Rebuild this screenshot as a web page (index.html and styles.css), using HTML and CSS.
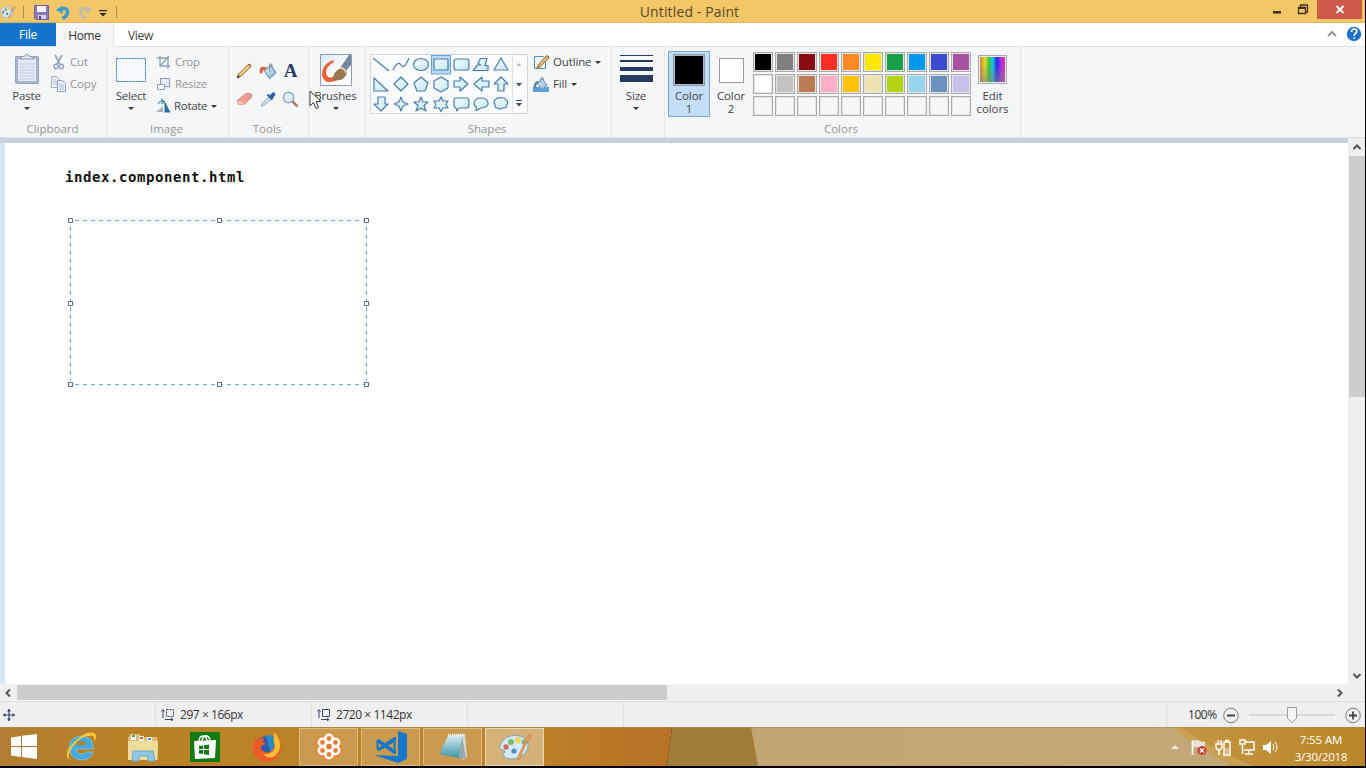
FILE: index.html
```html
<!DOCTYPE html>
<html lang="en">
<head>
<meta charset="utf-8">
<title>Untitled - Paint</title>
<link rel="stylesheet" href="styles.css">
</head>
<body>
<svg width="0" height="0" class="defs">
  <defs>
    <linearGradient id="shapeFill" x1="0" y1="0" x2="1" y2="1"><stop offset="0" stop-color="#f4fcff"/><stop offset="1" stop-color="#c5e6f5"/></linearGradient>
    <linearGradient id="blueFill" x1="0" y1="0" x2="1" y2="1"><stop offset="0" stop-color="#f4fbff"/><stop offset="1" stop-color="#79a9d5"/></linearGradient>
    <linearGradient id="note" x1="0" y1="0" x2="0" y2="1"><stop offset="0" stop-color="#d9eef1"/><stop offset="1" stop-color="#3c94a9"/></linearGradient>
    <symbol id="palette" viewBox="0 0 34 30">
      <path d="M6 8C12 1 28 2 30 12c1 8-7 15-16 15-7 0-10-4-8-6 2-1 1-3-2-3-4-1-2-7 2-10z" fill="#d4eaf5" stroke="#72a5c5"/>
      <circle cx="13" cy="10" r="3" fill="#77ba6a"/><circle cx="20" cy="8" r="3" fill="#ead35a"/><circle cx="8" cy="15" r="2.7" fill="#d2685e"/><circle cx="16" cy="19" r="2.6" fill="#4c8dcc"/><circle cx="26" cy="10" r="2.5" fill="#74b976"/>
      <path d="M19 27L28 7l4-5 1 5-4 3-8 18z" fill="#e39f5c" stroke="#bd7541" stroke-width=".6"/>
    </symbol>
    <symbol id="pencil" viewBox="0 0 16 16"><path d="M1 15l1.500-4L12 1.500q2-.5 2.500 2.500L5 13.500z" fill="#e9bb66" stroke="#8b6e4a" stroke-width=".9"/><path d="M4 12L13 3" stroke="#f8dc9c"/><path d="M12 1.500q3-1 2.500 2.500" fill="none" stroke="#b06848" stroke-width="1.300"/><path d="M1 15l1-3 2 2z" fill="#393633"/></symbol>
    <symbol id="bucket" viewBox="0 0 17 16"><path d="M5 7l6-4.500 5 6.500-6 5.500z" fill="url(#blueFill)" stroke="#6f8dab"/><path d="M10 8V2q1.500-2.500 2.500 1v2" fill="none" stroke="#7d8f9f"/><path d="M7 4Q-1 2 1 10l2 0Q3 6 7 6z" fill="#df6349"/></symbol>
  </defs>
</svg>
<div class="screen">
  <header class="titlebar">
    <div class="quick">
      <svg class="q-app" width="16" height="18" viewBox="1 0 34 30"><use href="#palette" width="34" height="30"/></svg>
      <i class="q-sep"></i>
      <svg class="q-save" width="15" height="15" viewBox="0 0 15 15"><path d="M.5.5h14v14H2L.5 13z" fill="#8a78ba" stroke="#725f9f"/><path d="M3 1h9v6H3z" fill="#f3f3fa"/><path d="M4 10h8v4H4z" fill="#d3d1e2"/><path d="M5 11h2v3H5z" fill="#504682"/></svg>
      <svg class="q-undo" width="15" height="15" viewBox="0 0 15 15"><path d="M4 4.500Q11 1.500 11.500 7q0 4-5 6.500" fill="none" stroke="#3c9cc9" stroke-width="3.600"/><path d="M0 5L6.500.5v8.500z" fill="#3c9cc9"/></svg>
      <svg class="q-redo" width="15" height="15" viewBox="0 0 15 15"><path d="M11 4.500Q4 1.500 3.500 7q0 4 5 6.500" fill="none" stroke="#c6bba6" stroke-width="3.400"/><path d="M15 5L8.500.5v8.500z" fill="#c6bba6"/></svg>
      <svg class="q-more" width="8" height="7"><path d="M0 0h8v1.300H0zM.5 3h7L4 6.500z" fill="#2e2818"/></svg>
      <i class="q-sep"></i>
    </div>
    <div class="title">Untitled - Paint</div>
    <div class="winbtns">
      <svg width="90" height="20" viewBox="0 0 90 20"><path d="M1 11h8v2.500H1z" fill="#3c311b"/><path d="M26.500 7.500h7v6h-7zM28.500 7V5h7v7H34" fill="none" stroke="#3c311b" stroke-width="1.300"/><path d="M26 7h8v2h-8z" fill="#3c311b"/><path d="M45 0h45v19H45z" fill="#ce5a4b"/><path d="M64.500 6l7 7m0-7l-7 7" stroke="#fff" stroke-width="1.900"/></svg>
    </div>
  </header>
  <nav class="tabs">
    <div class="tab-file">File</div><div class="tab-home">Home</div><div class="tab-view">View</div>
    <svg class="tab-help" width="38" height="20" viewBox="0 0 38 20"><path d="M1 12l4-4 4 4" fill="none" stroke="#999" stroke-width="2"/><circle cx="27" cy="10" r="7.200" fill="#1b70cc"/><path d="M24.500 8q0-3 2.700-3 2.600 0 2.600 2.300 0 1.400-1.500 2.200-1 .6-1 2v.5M27.200 13.400v1.600" fill="none" stroke="#fff" stroke-width="1.700"/></svg>
  </nav>
  <section class="ribbon">
    <div class="group g-clip">
      <div class="body">
        <div class="big b-paste">
          <svg width="26" height="34" viewBox="0 0 26 34"><rect x="1.500" y="4.500" width="23" height="27" rx="1" fill="#a7b4cb" stroke="#96a4be"/><path d="M4 7h18v22H4z" fill="#e4ebf7"/><path d="M5 12h16M5 15h16M5 18h16M5 21h16M5 24h16M5 27h16" stroke="#bdcce2"/><path d="M6 7q1-3 5-3 2-4 4 0 4 0 5 3z" fill="#e3e5e9" stroke="#8998b0"/></svg>
          <span>Paste</span><i class="arr"></i>
        </div>
        <div class="rows off">
          <div><svg width="16" height="16" viewBox="0 0 16 16"><path d="M4 1l5 9M11 1L6 10" stroke="#97a5ba" stroke-width="1.600"/><ellipse cx="5" cy="12.500" rx="2" ry="2.300" fill="none" stroke="#8fa3c1" stroke-width="1.400"/><ellipse cx="10.500" cy="12.500" rx="2" ry="2.300" fill="none" stroke="#8fa3c1" stroke-width="1.400"/></svg><span>Cut</span></div>
          <div><svg width="16" height="16" viewBox="0 0 16 16"><path d="M.5.5h5l3 3v8h-8z" fill="#eef2f8" stroke="#a0afc9"/><path d="M6.500 4.500h5l3 3v8h-8z" fill="#e7edf7" stroke="#93a5c2"/><path d="M2 4h4M2 6h4M2 8h4M8 9h5M8 11h5M8 13h5" stroke="#b1c0d7"/></svg><span>Copy</span></div>
        </div>
      </div>
      <div class="label l-clip">Clipboard</div>
    </div>
    <div class="group g-image">
      <div class="body">
        <div class="big b-select">
          <svg width="30" height="34" viewBox="0 0 30 34"><rect x=".5" y="6.500" width="29" height="23" fill="#f3f9fe" stroke="#2972b1" stroke-dasharray="2 1"/></svg>
          <span>Select</span><i class="arr"></i>
        </div>
        <div class="rows">
          <div class="dim"><svg width="16" height="16" viewBox="0 0 16 16"><path d="M4 2v10h10M1 4h11v11M5 11l8-9" fill="none" stroke="#8ba0bb" stroke-width="1.300"/></svg><span>Crop</span></div>
          <div class="dim"><svg width="16" height="16" viewBox="0 0 16 16"><path d="M4.500 2.500h9v8h-9z" fill="#e6eefa" stroke="#8199c0"/><path d="M1.500 8.500h7v5h-7z" fill="#f3f7fd" stroke="#8ca3c5"/></svg><span>Resize</span></div>
          <div><svg width="16" height="16" viewBox="0 0 16 16"><path d="M0 14L7 8v6z" fill="#a9b7c3"/><path d="M8.500 14.500V3L14.500 14.500z" fill="#286ea5"/><path d="M2 6q2-4 6-2M5 1l3.500 3-3.500 2" fill="none" stroke="#508bb4" stroke-width="1.300"/></svg><span class="t-rotate">Rotate</span><i class="arr side"></i></div>
        </div>
      </div>
      <div class="label l-image">Image</div>
    </div>
    <div class="group g-tools">
      <div class="body tools">
        <svg width="16" height="16"><use href="#pencil" width="16" height="16"/></svg>
        <svg width="18" height="17"><use href="#bucket" width="18" height="17"/></svg>
        <b class="glyph">A</b>
        <svg width="17" height="16" viewBox="0 0 17 16"><path d="M1 10L9 3q2-1 3-.5l3.500.5q1 2-.5 4l-7 6.500H2.500z" fill="#ec9c90" stroke="#d07a72" stroke-width=".8"/><path d="M1 10l5.500 1L8 13.500H2.500z" fill="#f9c6b8"/></svg>
        <svg width="16" height="16" viewBox="0 0 16 16"><path d="M1 15l1.500-3 6-6 2.500 2.500-6.500 5.500z" fill="#c6e0ea" stroke="#8fa5b3" stroke-width=".9"/><path d="M7.500 3.500l5 5M10 6l2.500-3q2-1.500 1.500 1l-2.500 3" fill="#326bae" stroke="#2c5f9c" stroke-width="2.200"/></svg>
        <svg width="17" height="17" viewBox="0 0 17 17"><circle cx="6.500" cy="6.500" r="5.200" fill="#dceef7" stroke="#9caab5" stroke-width="1.500"/><path d="M10.500 10.500l5 5" stroke="#a77f66" stroke-width="2.500"/></svg>
      </div>
      <div class="label l-tools">Tools</div>
    </div>
    <div class="group g-brush">
      <div class="body">
        <div class="big b-brush">
          <svg width="32" height="34" viewBox="0 0 32 34"><defs><linearGradient id="bg1" x1="0" y1="0" x2="1" y2="1"><stop offset="0" stop-color="#d5e5f4"/><stop offset=".6" stop-color="#fff"/></linearGradient></defs><path d="M.5 2.500h31v31H.5z" fill="url(#bg1)" stroke="#8e9cac"/><path d="M13 8Q1 13 2 23q2 11 16 5l-2-4Q7 28 6 21q0-7 8-11z" fill="#ec6238"/><path d="M13 28q0-9 8-12 5 0 6 5-3 9-14 7z" fill="#96764a"/><path d="M20 16l9-13h2v10l-5 6z" fill="#7687a3"/><path d="M20 16q5 0 6 5" fill="none" stroke="#d9cdb2" stroke-width="2"/></svg>
          <span>Brushes</span><i class="arr"></i>
        </div>
      </div>
    </div>
    <div class="group g-shapes">
      <div class="body">
        <div class="gallery">
          <svg width="141" height="58" viewBox="0 0 141 58">
            <rect x="60.500" y=".5" width="19" height="18.500" fill="#b9dafa" stroke="#6aa2dc"/>
            <g fill="url(#shapeFill)" stroke="#4a7dae" stroke-width="1.200" stroke-linejoin="round">
              <path d="M2 3l16 13" /><path d="M22 15q5-10 8-5t8-7" fill="none"/><ellipse cx="50" cy="9.500" rx="7.500" ry="6"/><path d="M63 4h14v11H63z"/><rect x="83" y="4" width="15" height="11" rx="2.500"/><path d="M102 15.500l4.500-5.500 3 0-2.500-2 2.500-4.500h6.500l-2 7h3v5z"/><path d="M130 3l7 12h-14z"/>
              <path d="M3 23v13h14z"/><path d="M30 22l7 7-7 7-7-7z"/><path d="M50 22l7 6-3 8h-8l-3-8z"/><path d="M70 22l7 4v7l-7 4-7-4v-7z"/><path d="M83 26h6v-4l8 7-8 7v-4h-6z"/><path d="M118 26h-7v-4l-8 7 8 7v-4h7z"/><path d="M127 36v-7h-4l7-7 7 7h-4v7z"/>
              <path d="M7 42h7v7h3l-7 7-7-7h4z"/><path d="M30 42l2 5 5 2-5 2-2 5-2-5-5-2 5-2z"/><path d="M50 42l2 5h5l-4 3.500 2 5.500-5-3-5 3 2-5.500-4-3.500h5z"/><path d="M70 42l2 4h5l-2 3.500 2 3.500h-5l-2 3.500-2-3.500h-5l2-3.500-2-3.500h5z"/><path d="M85 43h10q3 0 3 3v4q0 3-3 3h-7l-2 3-1-3q-2 0-2-3v-4q0-3 2-3z"/><path d="M103 48q1-5 7-5t7 4.500-7 5.500l-5 2.500.500-3.500q-2.500-1-2.500-4z"/><path d="M125 44q3-2 5-1 4-1 5 2 3 2 1 4.500 0 3.500-4 3.500-3 2-5 0-4 0-3-3.500-2-4 1-5.500z"/>
            </g>
          </svg>
          <svg width="15" height="58" viewBox="0 0 15 58"><path d="M.5 0v58" stroke="#dde1e5"/><path d="M4.500 11L7 8l2.500 3z" fill="#b4b9be"/><path d="M4 28h6l-3 3.500zM4 45h6v1H4zm0 3h6l-3 3.500z" fill="#444d59"/></svg>
        </div>
        <div class="rows shape-opts">
          <div><svg width="17" height="16" viewBox="0 0 17 16"><path d="M11 2.500H1.500v12h11V8" fill="#f2f9fe" stroke="#5591bc"/><path d="M5 11L13 2q3-1 3 2L7 13l-3 1z" fill="#e4b86c" stroke="#8c704c"/></svg><span>Outline</span><i class="arr side"></i></div>
          <div><svg width="17" height="16" viewBox="0 0 17 16"><path d="M0 11h16v5H0z" fill="#5b9fe0"/><path d="M4 7l5-4.500L14 9l-5 5z" fill="url(#blueFill)" stroke="#7894ae"/><path d="M8 7V2q1.500-2 2.500 1v2" fill="none" stroke="#7d8f9f"/><path d="M6 5Q0 5 1 12l2-.5Q3 7 6 7z" fill="#5c7e9d"/></svg><span>Fill</span><i class="arr side"></i></div>
        </div>
      </div>
      <div class="label l-shapes">Shapes</div>
    </div>
    <div class="group g-size">
      <div class="body"><div class="big b-size">
        <svg width="33" height="34" viewBox="0 0 33 34"><path d="M0 3h33v1H0zM0 8h33v2H0zM0 15h33v4H0zM0 23h33v7H0z" fill="#243b5f"/></svg>
        <span>Size</span><i class="arr"></i>
      </div></div>
    </div>
    <div class="group g-colors">
      <div class="body">
        <div class="col1"><div class="sw1"></div><span>Color<br>1</span></div>
        <div class="col2"><div class="sw2"></div><span>Color<br>2</span></div>
        <div class="pal">
          <i class="c-black"></i><i class="c-gray"></i><i class="c-dred"></i><i class="c-red"></i><i class="c-orange"></i><i class="c-yellow"></i><i class="c-green"></i><i class="c-turq"></i><i class="c-indigo"></i><i class="c-purple"></i>
          <i class="c-white"></i><i class="c-lgray"></i><i class="c-brown"></i><i class="c-rose"></i><i class="c-gold"></i><i class="c-cream"></i><i class="c-lime"></i><i class="c-sky"></i><i class="c-steel"></i><i class="c-lav"></i>
          <i></i><i></i><i></i><i></i><i></i><i></i><i></i><i></i><i></i><i></i>
        </div>
        <div class="edit"><div class="rainbow"></div><span>Edit<br>colors</span></div>
      </div>
      <div class="label l-colors">Colors</div>
    </div>
  </section>
  <main class="work">
    <div class="canvas">
      <div class="doc-text">index.component.html</div>
      <svg class="selection" width="301" height="170" viewBox="0 0 301 170"><path d="M7 3.500h290M7 167.500h290" stroke="#6fa8ec" stroke-width="1" stroke-dasharray="4 4"/><path d="M2.500 10v154M298.500 10v154" stroke="#6fa8ec" stroke-width="1" stroke-dasharray="4 4"/><g fill="#fff" stroke="#596b86"><path d="M.5 1.500h4v4h-4zM149.500 1.500h4v4h-4zM296.500 1.500h4v4h-4zM.5 84.500h4v4h-4zM296.500 84.500h4v4h-4zM.5 165.500h4v4h-4zM149.500 165.500h4v4h-4zM296.500 165.500h4v4h-4z"/></g></svg>
    </div>
    <div class="vscroll">
      <svg width="16" height="17" viewBox="0 0 16 17"><path d="M4.500 11L8 7.500l3.500 3.500" fill="none" stroke="#555" stroke-width="2"/></svg>
      <div class="vthumb"></div>
      <svg width="16" height="17" viewBox="0 0 16 17"><path d="M4.500 7L8 10.500 11.500 7" fill="none" stroke="#555" stroke-width="2"/></svg>
    </div>
  </main>
  <div class="hscroll">
    <svg width="17" height="16" viewBox="0 0 17 16"><path d="M10 4.500L6.500 8l3.500 3.500" fill="none" stroke="#555" stroke-width="2"/></svg>
    <div class="hthumb"></div>
    <svg width="17" height="16" viewBox="0 0 17 16"><path d="M7 4.500L10.500 8 7 11.500" fill="none" stroke="#555" stroke-width="2"/></svg>
  </div>
  <footer class="status">
    <div class="s-pos"><svg width="12" height="12" viewBox="0 0 12 12"><path d="M0 6h12M6 0v12" stroke="#35476b" stroke-width="1.200"/><path d="M6 0l2 2.500H4zM6 12l2-2.500H4zM0 6l2.500-2v4zM12 6L9.500 4v4z" fill="#35476b"/></svg></div>
    <div class="s-sel"><svg width="13" height="13" viewBox="0 0 13 13"><path d="M2 10V2M.5 3.500L2 1.500l1.500 2M4 11.500h8M10 10l2 1.500-2 1.500" fill="none" stroke="#35476b"/><path d="M5.500 1.500h7v7h-7z" fill="none" stroke="#35476b" stroke-dasharray="2 1"/></svg><span>297 × 166px</span></div>
    <div class="s-dim"><svg width="13" height="13" viewBox="0 0 13 13"><path d="M2 10V2M.5 3.500L2 1.500l1.500 2M4 11.500h8M10 10l2 1.500-2 1.500M5.500 1.500h7v7h-7z" fill="none" stroke="#35476b"/></svg><span>2720 × 1142px</span></div>
    <div class="s-file"></div>
    <div class="s-zoom"><span>100%</span>
      <svg width="140" height="18" viewBox="0 0 140 18"><path d="M28 8h86v2H28z" fill="#d8d8d8"/><path d="M66.500 1.500h9v11l-4.500 4-4.500-4z" fill="#f4f4f4" stroke="#9b9b9b"/><g fill="#f1f1f1" stroke="#777"><circle cx="10" cy="9.500" r="7.300"/><circle cx="132" cy="9.500" r="7.300"/></g><path d="M6 9.500h8M128 9.500h8M132 5.500v8" stroke="#444" stroke-width="1.800"/></svg>
    </div>
  </footer>
  <div class="taskbar">
    <svg class="wall" width="1366" height="39" viewBox="0 0 1366 39"><defs><linearGradient id="w1"><stop offset="0" stop-color="#b07d33"/><stop offset=".2" stop-color="#ba8125"/><stop offset=".75" stop-color="#bc8328"/><stop offset="1" stop-color="#b87226"/></linearGradient><linearGradient id="w2"><stop offset="0" stop-color="#c2a772"/><stop offset="1" stop-color="#c4a979"/></linearGradient><linearGradient id="w3"><stop offset="0" stop-color="#c69643"/><stop offset="1" stop-color="#b88628"/></linearGradient></defs><path d="M0 0h672l-5 39H0z" fill="url(#w1)"/><path d="M672 0h80l7 39h-92z" fill="#a07d3b"/><path d="M751 0h615v39H758z" fill="url(#w2)"/><path d="M1171 0q28 22 62 39h133V0z" fill="url(#w3)"/><path d="M1171 0h9q27 19 73 39h-20q-34-17-62-39z" fill="#caa053"/><path d="M0 .5h1366" stroke="#a88b56" opacity=".6"/></svg>
    <div class="tasks">
      <div class="task"><svg width="28" height="28" viewBox="0 0 28 28"><path d="M1 4.500l10-1.500V13H1zM12 2.800L27 1v12H12zM1 14h10v10L1 22.500zM12 14h15v12l-15-2z" fill="#fff"/></svg></div>
      <div class="task"><svg width="32" height="32" viewBox="0 0 32 32"><path d="M28 18H11q1 5 6 5 3 0 4.500-2H28q-3 8-11 8Q5 28 4 17 5 5 17 5q12 1 11 13z" fill="#45a9df" stroke="#85cdec" stroke-width=".7"/><path d="M11 14h10q-1-4-5-4t-5 4z" fill="#b7822b"/><path d="M5 29Q-3 24 9 11 21-1 29 2q4 2 0 9 1-8-4-6Q18 4 10 13 1 24 5 29z" fill="#f4ca3c"/></svg></div>
      <div class="task"><svg width="32" height="30" viewBox="0 0 32 30"><path d="M1 6l2-4h10l1 3h16l1 5v18H1z" fill="#d8bd73"/><path d="M4 3h5v5H4zM12 4h5v5h-5zM20 5h5v5h-5z" fill="#fff"/><path d="M5 3h3v2H5z" fill="#35a74b"/><path d="M13 5h3v2h-3z" fill="#d84d36"/><path d="M21 6h3v2h-3z" fill="#488bd0"/><path d="M1 9h30l-1 19H1z" fill="#efdd9b"/><path d="M5 29l1-10h20l2 10h-7v-5h-9v5z" fill="#8fc7e4" stroke="#6aa8cb"/></svg></div>
      <div class="task"><svg width="30" height="30" viewBox="0 0 30 30"><path d="M0 0h30v30H0z" fill="#107b12"/><path d="M4 9l22-1-1 18-20 1z" fill="#fff"/><path d="M9 10q0-6 4-6t4 6M12 9q1-6 5-5 3 1 3 6" fill="none" stroke="#fff" stroke-width="1.500"/><path d="M9 14l4-.6V17H9zM14 13.300l5-.7V17h-5zM9 18h4v4l-4-.5zM14 18h5v5l-5-.8z" fill="#107b12"/></svg></div>
      <div class="task"><svg width="32" height="32" viewBox="0 0 32 32"><circle cx="16" cy="17" r="12" fill="#315cab"/><path d="M15 4q12-1 12 12 0 8-6 12" fill="#278cc3"/><path d="M4 8q-5 9 0 17 7 8 17 5 9-4 9-15 0-9-7-13 3 9 0 14-3 7-9 5-5-2-4-6l5-2-3-2 1-4q-4 0-6 2-3-1-3-5z" fill="#ec5b28"/><path d="M23 1q-1 10 1 15-2 8-12 7 6 6 12 2 6-5 5-13-1-6-6-11z" fill="#f9be34"/></svg></div>
      <div class="task open"><svg width="32" height="30" viewBox="0 0 32 30"><g fill="#ef7f32" stroke="#ef7f32" stroke-width="7"><circle cx="16" cy="7" r="3"/><circle cx="22.500" cy="10.800" r="3"/><circle cx="22.500" cy="18.800" r="3"/><circle cx="16" cy="22.500" r="3"/><circle cx="9.500" cy="18.800" r="3"/><circle cx="9.500" cy="10.800" r="3"/></g><g fill="#e97c33" stroke="#fff" stroke-width="2.600"><circle cx="16" cy="6.500" r="3.700"/><circle cx="22.500" cy="10.500" r="3.700"/><circle cx="22.500" cy="18.500" r="3.700"/><circle cx="16" cy="22.500" r="3.700"/><circle cx="9.500" cy="18.500" r="3.700"/><circle cx="9.500" cy="10.500" r="3.700"/></g><circle cx="16" cy="14.500" r="4" fill="#e97c33" stroke="#fff" stroke-width="2.300"/></svg></div>
      <div class="task open"><svg width="34" height="32" viewBox="0 0 34 32"><path d="M24 0l9 3v25l-9 4-24-8 24 1z" fill="#1677c8"/><path d="M3 9l2-1 17 12v3h-2L3 11zM3 18L20 6h2v4L5 20l-2-1z" fill="#1677c8"/><path d="M3.500 9v9M20.500 7v15" stroke="#1677c8" stroke-width="2"/></svg></div>
      <div class="task open"><svg width="30" height="28" viewBox="0 0 30 28"><path d="M11 2l16-1 2 24-4 2z" fill="#d3d9d9"/><path d="M10 3l15-1-4 23L1 21z" fill="url(#note)"/><path d="M24 3l4 23-7-1z" fill="#96a9ad"/><path d="M10 2h16" stroke="#edf5f5" stroke-width="2.500" stroke-dasharray="1 1"/></svg></div>
      <div class="task open active"><svg width="34" height="30"><use href="#palette" width="34" height="30"/></svg></div>
    </div>
    <div class="tray">
      <svg width="116" height="20" viewBox="0 0 116 20"><path d="M3 12l4-4 4 4z" fill="#f4ead8"/><path d="M24.500 3v15" stroke="#fff" stroke-width="1.600"/><path d="M25 4q4-2 7 0t5 0v7q-3 2-6 0t-6 0z" fill="#e9e3d9"/><circle cx="34" cy="13.500" r="4.500" fill="#c83e39"/><path d="M32 11.500l4 4m0-4l-4 4" stroke="#fff" stroke-width="1.300"/><g fill="none" stroke="#fff" stroke-width="1.500"><path d="M50 3v4M53 3v4M48 7h6v3q-1 3-3 3t-3-3zM51 13v5M56 5h6v13h-6zM57 3.500h4"/><path d="M78 5h8v8H76M72 3h5v4h-5zM74.500 7v10M81 13v4M77 17h8"/></g><path d="M57 11h4v6h-4z" fill="#d9b986"/><path d="M95 8h3l5-4v13l-5-4h-3z" fill="#fff"/><path d="M105 7q2 3 0 6M107 5q4 5 0 10" fill="none" stroke="#fff"/></svg>
      <div class="clock"><span>7:55 AM</span><span class="date">3/30/2018</span></div>
    </div>
  </div>
  <svg class="cursor" width="13" height="20" viewBox="0 0 13 20"><path d="M1 1v15l3.500-3.500L7 18.500l2.500-1L7 11.500h5z" fill="#fff" stroke="#333"/></svg>
</div>
</body>
</html>
```
FILE: styles.css
```css
* { box-sizing: border-box; }
body { margin: 0; background: #000; font-family: "Open Sans", "Noto Sans", sans-serif; font-size: 11.5px; color: #444; }
svg { display: block; flex: none; overflow: visible; }
.defs { position: absolute; }
.screen { position: relative; width: 1365px; height: 768px; overflow: hidden; display: flex; flex-direction: column; background: #000; }
.titlebar { height: 23px; flex: none; background: #f3c668; display: grid; grid-template-columns: 620px 139px 1fr; border-bottom: 1px solid #dfb45c; }
.quick { display: flex; align-items: center; }
.quick .q-save { margin-left: 10px; }
.quick .q-undo { margin-left: 7px; }
.quick .q-redo { margin-left: 6px; }
.quick .q-more { margin: 3px 9px 0 7px; }
.q-sep { width: 1px; height: 12px; background: #ad8c4b; }
.q-app + .q-sep { margin-left: 7px; }
.title { font-size: 14px; line-height: 24px; letter-spacing: .13px; text-align: center; color: #59482a; white-space: nowrap; }
.winbtns { display: flex; justify-content: flex-end; padding-right: 3px; }
.tabs { height: 24px; flex: none; background: #fff; display: flex; font-size: 12px; line-height: 24px; text-align: center; border-bottom: 1px solid #dfe3e8; }
.tab-file { width: 56px; height: 23px; background: #1673ce; color: #fff; letter-spacing: -.2px; }
.tab-home { width: 58px; height: 24px; background: #f5f6f8; border-right: 1px solid #dfe3e8; color: #333; line-height: 26px; letter-spacing: -.4px; }
.tab-view { width: 53px; line-height: 26px; letter-spacing: -.3px; }
.tab-help { margin-left: auto; margin-top: 1px; }
.ribbon { height: 91px; flex: none; background: #f5f6f8; display: flex; border-bottom: 1px solid #dce1e9; }
.group { display: flex; flex-direction: column; height: 90px; border-right: 1px solid #e3e6ea; }
.g-clip { width: 107px; }
.g-image { width: 122px; }
.g-tools { width: 80px; }
.g-brush { width: 57px; }
.g-shapes { width: 246px; }
.g-size { width: 53px; }
.g-colors { width: 356px; }
.body { height: 73px; flex: none; display: flex; align-items: flex-start; }
.label { line-height: 18px; text-align: center; color: #959595; }
.l-clip { padding-right: 1px; }
.l-image { padding-right: 2px; }
.l-tools { padding-right: 3px; }
.l-shapes { padding-right: 3px; }
.l-colors { padding-right: 3px; }
.big { display: flex; flex-direction: column; align-items: center; padding-top: 5px; line-height: 20px; letter-spacing: -.2px; }
.b-paste { width: 53px; }
.b-select { width: 48px; margin-right: 1px; }
.b-brush { width: 53px; margin-right: 1px; }
.b-size { width: 48px; }
.arr { width: 0; height: 0; border: 3px solid transparent; border-top: 3.5px solid #333; border-bottom: 0; }
.big .arr { margin-top: 1px; }
.rows { padding-top: 4px; }
.rows > div { display: flex; align-items: center; height: 22px; line-height: 22px; gap: 3px; letter-spacing: -.15px; }
.rows > div .arr { margin-left: 1px; }
.rows > div .t-rotate { letter-spacing: -.3px; margin-left: -1px; }
.off, .dim { color: #959595; }
.g-clip .rows > div { margin-left: -2px; }
.g-image .rows > div { letter-spacing: -.3px; }
.tools { display: grid; grid-template-columns: 24px 23px 23px; grid-template-rows: 28px 28px; padding: 10px 0 0 3px; justify-items: center; align-items: center; }
.glyph { font: bold 19px/20px "Liberation Serif", serif; color: #293f66; }
.gallery { margin: 7px 0 0 4px; width: 158px; height: 60px; border: 1px solid #d3d7dc; display: flex; background: #f9fbfd; }
.shape-opts { padding-left: 5px; }
.col1, .col2, .edit { display: flex; flex-direction: column; align-items: center; line-height: 13px; text-align: center; letter-spacing: -.1px; }
.col1 { width: 42px; height: 66px; margin: 4px 0 0 3px; border: 1px solid #75a9dc; background: #c5def7; padding-top: 2px; }
.sw1 { width: 32px; height: 32px; background: #000; border: 1px solid #8d99a5; box-shadow: inset 0 0 0 1px #aebdcb; margin-bottom: 3px; }
.col2 { width: 42px; padding-top: 11px; }
.sw2 { width: 25px; height: 25px; background: #fff; border: 1px solid #999; margin: 0 0 6px 1px; }
.pal { margin: 5px 0 0; display: grid; grid-template-columns: repeat(10, 20px); grid-auto-rows: 20px; gap: 2px; padding-left: 1px; }
.pal i { border: 1px solid #aaa; box-shadow: inset 0 0 0 1px #e4e4e4; }
.c-black { background: #000; }
.c-gray { background: #7f7f7f; }
.c-dred { background: #8b0b13; }
.c-red { background: #fc2f22; }
.c-orange { background: #ff8827; }
.c-yellow { background: #ffe700; }
.c-green { background: #189d49; }
.c-turq { background: #0097ed; }
.c-indigo { background: #3c4bcf; }
.c-purple { background: #a752a3; }
.c-white { background: #fff; }
.c-lgray { background: #c3c3c3; }
.c-brown { background: #bb7c54; }
.c-rose { background: #ffb0c8; }
.c-gold { background: #ffc20b; }
.c-cream { background: #efe2ae; }
.c-lime { background: #b3d415; }
.c-sky { background: #94d5ec; }
.c-steel { background: #6b91c0; }
.c-lav { background: #c8c0e8; }
.edit { padding-top: 8px; width: 43px; }
.rainbow { width: 29px; height: 29px; margin-bottom: 5px; border: 1px solid #aaa; box-shadow: inset 0 0 0 1px #eee; background: linear-gradient(transparent 30%, rgba(128,128,128,.6)), linear-gradient(90deg, #c77545, #e5dc2c 22%, #2dc83a 38%, #20c6e1 50%, #1c30e6 66%, #b12ce5 82%, #ef2f9b); }
.work { height: 546px; flex: none; display: flex; background: linear-gradient(#c8d0e0 5px, #dae4f4 5px); }
.canvas { width: 1343px; margin: 5px 0 0 5px; background: #fff; padding: 24px 60px; }
.doc-text { font: bold 14px/20px "DejaVu Sans Mono", monospace; letter-spacing: .57px; color: #111; }
.selection { margin: 30px 0 0 3px; }
.vscroll { width: 17px; background: #efefef; display: flex; flex-direction: column; padding-left: 1px; }
.vthumb { height: 241px; background: #cdcdcd; margin: 1px 0 auto; }
.hscroll { height: 17px; flex: none; background: #efefef; display: flex; border-top: 1px solid #f5f5f5; border-bottom: 1px solid #f5f5f5; }
.hthumb { width: 650px; background: #cdcdcd; margin-right: auto; }
.hscroll > svg:last-child { margin-right: 17px; }
.status { height: 26px; flex: none; background: #efefef; display: flex; border-top: 1px solid #dcdcdc; font-size: 12px; line-height: 25px; letter-spacing: -.45px; color: #333; }
.status > div { display: flex; align-items: center; gap: 6px; border-right: 1px solid #dedede; }
.s-pos { width: 156px; padding-left: 3px; }
.s-sel, .s-dim { width: 156px; padding-left: 5px; }
.s-file { width: 156px; }
.status .s-zoom { margin-left: auto; width: 199px; border-left: 1px solid #dedede; border-right: 0; gap: 4px; padding-left: 21px; }
.taskbar { position: relative; height: 39px; flex: none; display: flex; }
.wall { position: absolute; left: 0; top: 0; }
.tasks { position: relative; display: flex; gap: 3px; align-items: center; left: -1px; }
.task { width: 59px; height: 38px; display: flex; align-items: center; justify-content: center; }
.task:first-child { width: 50px; }
.task:nth-child(2) { margin-left: -1px; }
.open { background: rgba(225,195,145,.38); border: 1px solid rgba(230,205,160,.65); }
.active { background: rgba(235,217,187,.55); border: 1px solid #e8d8ba; }
.tray { position: relative; margin-left: auto; display: flex; align-items: center; gap: 7px; color: #fff; width: 197px; }
.clock { width: 60px; display: flex; flex-direction: column; align-items: center; line-height: 17px; padding-top: 2px; letter-spacing: -.1px; }
.date { white-space: nowrap; letter-spacing: -.2px; }
.cursor { position: absolute; left: 309px; top: 90px; }
```
